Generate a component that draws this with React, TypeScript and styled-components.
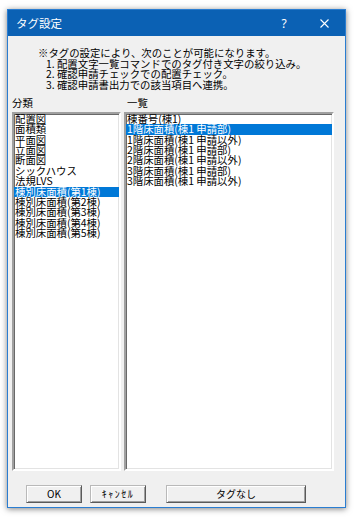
import React from "react";
import styled, { createGlobalStyle } from "styled-components";

const GlobalStyle = createGlobalStyle`
  html, body { margin: 0; padding: 0; background: #ffffff; }
  body { font-family: "Noto Sans CJK JP", "Noto Sans", sans-serif; color: #000; }
`;

const Stage = styled.div`
  display: flex;
  padding: 9px 8px 9px 7px;
`;

const Window = styled.div`
  width: 339px;
  height: 499px;
  box-sizing: border-box;
  border: 1px solid #2a7dd1;
  background: #f0f0f0;
  box-shadow: 0 1px 6px rgba(0, 0, 0, 0.5);
  display: flex;
  flex-direction: column;
`;

const TitleBar = styled.div`
  height: 26px;
  flex: none;
  background: #0b61b4;
  display: flex;
  align-items: center;
  color: #ffffff;
`;

const TitleText = styled.div`
  flex: 1;
  padding-left: 8px;
  font-size: 11.5px;
  line-height: 26px;
`;

const TitleButton = styled.div<{ $w: number }>`
  width: ${(p) => p.$w}px;
  height: 26px;
  display: flex;
  align-items: center;
  justify-content: center;
  font-family: "Noto Sans", sans-serif;
  font-size: 12px;
`;

const Body = styled.div`
  flex: 1;
  display: flex;
  flex-direction: column;
  padding: 11px 11px 4px 4px;
  min-height: 0;
`;

const Intro = styled.div`
  padding-left: 26px;
  font-size: 10.4px;
  line-height: 11px;
  white-space: nowrap;
`;

const Steps = styled.ol`
  list-style: none;
  margin: 1px 0 0 0;
  padding: 0 0 0 8px;
  line-height: 10.3px;
`;

const Columns = styled.div`
  flex: 1;
  min-height: 0;
  margin-top: 7px;
  display: grid;
  grid-template-columns: 109px 210px;
  column-gap: 3px;
`;

const Column = styled.div`
  display: flex;
  flex-direction: column;
  min-height: 0;
`;

const Label = styled.div<{ $indent: number }>`
  font-size: 10.4px;
  line-height: 11px;
  height: 11px;
  padding-left: ${(p) => p.$indent}px;
  margin-bottom: 4px;
  white-space: nowrap;
`;

const ListBox = styled.ul`
  flex: 1;
  margin: 0;
  padding: 0;
  list-style: none;
  background: #ffffff;
  border: 2px solid;
  border-color: #a0a0a0 #ffffff #ffffff #a0a0a0;
  box-shadow: inset 1px 1px 0 #696969, inset -1px -1px 0 #e3e3e3;
  overflow: hidden;
`;

const Item = styled.li<{ $selected?: boolean }>`
  height: 10.4px;
  line-height: 10.4px;
  font-size: 10.4px;
  padding-left: 1px;
  white-space: nowrap;
  background: ${(p) => (p.$selected ? "#0078d7" : "transparent")};
  color: ${(p) => (p.$selected ? "#ffffff" : "#000000")};
`;

const ButtonRow = styled.div`
  flex: none;
  margin-top: 14px;
  padding-left: 14px;
  display: flex;
  gap: 8px;
`;

const Button = styled.button<{ $w: number; $lead?: number; $spacing?: number }>`
  width: ${(p) => p.$w}px;
  height: 18px;
  margin-left: ${(p) => p.$lead ?? 0}px;
  padding: 0;
  box-sizing: border-box;
  background: #f0f0f0;
  border: 1px solid;
  border-color: #b9b9b9 #5a5a5a #5a5a5a #b9b9b9;
  box-shadow: inset 1px 1px 0 #ffffff, inset -1px -1px 0 #a0a0a0;
  font-family: "Noto Sans CJK JP", "Noto Sans", sans-serif;
  font-size: 10px;
  line-height: 14px;
  letter-spacing: ${(p) => p.$spacing ?? 0}px;
  color: #000;
`;

const leftItems = [
  "配置図",
  "面積類",
  "平面図",
  "立面図",
  "断面図",
  "シックハウス",
  "法規LVS",
  "棟別床面積(第1棟)",
  "棟別床面積(第2棟)",
  "棟別床面積(第3棟)",
  "棟別床面積(第4棟)",
  "棟別床面積(第5棟)",
];

const rightItems = [
  "棟番号(棟1)",
  "1階床面積(棟1 申請部)",
  "1階床面積(棟1 申請以外)",
  "2階床面積(棟1 申請部)",
  "2階床面積(棟1 申請以外)",
  "3階床面積(棟1 申請部)",
  "3階床面積(棟1 申請以外)",
];

const CloseIcon = () => (
  <svg width="9" height="9" viewBox="0 0 9 9">
    <path d="M0.5 0.5 L8.5 8.5 M8.5 0.5 L0.5 8.5" stroke="#ffffff" strokeWidth="1.1" fill="none" />
  </svg>
);

export default function App() {
  return (
    <>
      <GlobalStyle />
      <Stage>
        <Window>
          <TitleBar>
            <TitleText>タグ設定</TitleText>
            <TitleButton $w={38}>?</TitleButton>
            <TitleButton $w={42}>
              <CloseIcon />
            </TitleButton>
          </TitleBar>
          <Body>
            <Intro>
              <div>※タグの設定により、次のことが可能になります。</div>
              <Steps>
                <li>1. 配置文字一覧コマンドでのタグ付き文字の絞り込み。</li>
                <li>2. 確認申請チェックでの配置チェック。</li>
                <li>3. 確認申請書出力での該当項目へ連携。</li>
              </Steps>
            </Intro>
            <Columns>
              <Column>
                <Label $indent={0}>分類</Label>
                <ListBox>
                  {leftItems.map((t, i) => (
                    <Item key={t} $selected={i === 7}>
                      {t}
                    </Item>
                  ))}
                </ListBox>
              </Column>
              <Column>
                <Label $indent={3}>一覧</Label>
                <ListBox>
                  {rightItems.map((t, i) => (
                    <Item key={t} $selected={i === 1}>
                      {t}
                    </Item>
                  ))}
                </ListBox>
              </Column>
            </Columns>
            <ButtonRow>
              <Button $w={56}>OK</Button>
              <Button $w={56} $spacing={1.5}>
                ｷｬﾝｾﾙ
              </Button>
              <Button $w={140} $lead={12}>
                タグなし
              </Button>
            </ButtonRow>
          </Body>
        </Window>
      </Stage>
    </>
  );
}
